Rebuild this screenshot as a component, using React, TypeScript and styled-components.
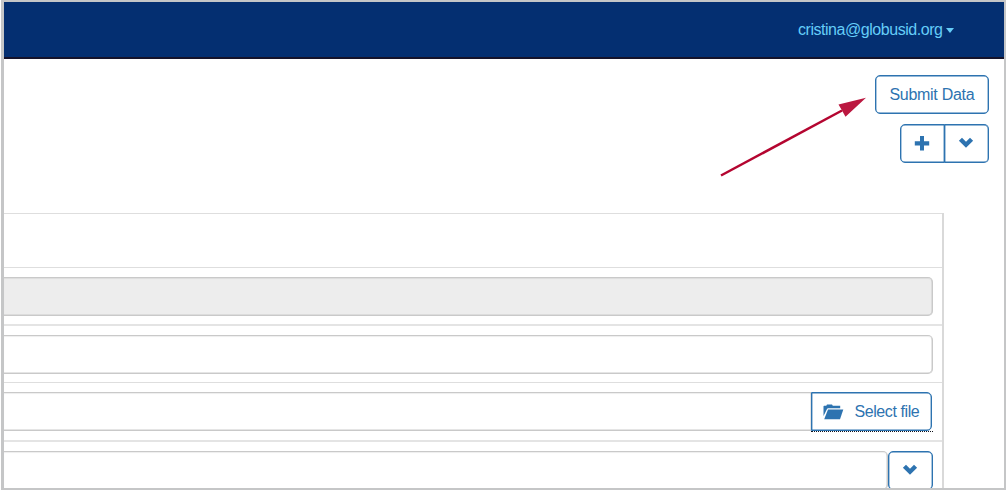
import React from 'react';
import styled, { createGlobalStyle, css } from 'styled-components';

const GlobalStyle = createGlobalStyle`
  * { box-sizing: border-box; }
  body { margin: 0; background: #fff; font-family: "Liberation Sans", Arial, sans-serif; }
`;

const blue = '#2d73b0';

const Frame = styled.div`
  position: relative;
  width: 1005px;
  height: 490px;
  margin-left: 1px;
  border: 2px solid #c5c6c7;
  border-left-width: 3px;
  overflow: hidden;
  display: flex;
  flex-direction: column;
  background: #fff;
`;

const Navbar = styled.header`
  flex: none;
  height: 57px;
  display: flex;
  justify-content: flex-end;
  align-items: center;
  padding-right: 50px;
  background: #042f71;
  border-bottom: 2px solid #15132b;
`;

const Account = styled.a`
  display: flex;
  align-items: center;
  gap: 2px;
  color: #65cdf8;
  font-size: 16px;
  line-height: 20px;
`;

const Label = styled.span<{ $width: number; $spacing: number }>`
  width: ${(p) => p.$width}px;
  letter-spacing: ${(p) => p.$spacing}px;
  text-align: left;
  white-space: nowrap;
`;

const Caret = styled.span`
  margin-top: 1px;
  border: 4px solid transparent;
  border-top: 5px solid #65cdf8;
  border-bottom: 0;
`;

const Actions = styled.div`
  flex: none;
  height: 154px;
  display: flex;
  flex-direction: column;
  align-items: flex-end;
  gap: 10px;
  padding: 16px 15px 0 0;
`;

const Button = styled.button<{ $width: number; $height?: number; $radius?: string }>`
  flex: none;
  width: ${(p) => p.$width}px;
  height: ${(p) => p.$height ?? 39}px;
  display: flex;
  align-items: center;
  justify-content: center;
  padding: 0 1px 0 0;
  color: ${blue};
  background: #fff;
  border: 1px solid ${blue};
  border-radius: ${(p) => p.$radius ?? '5px'};
  font: 16px "Liberation Sans", Arial, sans-serif;
  box-shadow: inset 0 0 0 0.4px ${blue};
`;

const ButtonGroup = styled.div`
  display: flex;
  button + button { margin-left: -1px; border-left-color: transparent; background-clip: padding-box; }
`;

const Table = styled.div`
  flex: none;
  width: 940px;
  height: 300px;
  border-right: 2px solid #d9d9d9;
`;

const Row = styled.div<{ $height: number; $line?: string }>`
  height: ${(p) => p.$height}px;
  display: flex;
  align-items: flex-start;
  padding: 9px 9px 0 0;
  border-top: ${(p) => p.$line ?? '1px solid #dedede'};
`;

const Input = styled.div<{ $disabled?: boolean; $joined?: boolean }>`
  flex: 1;
  height: 39px;
  border: 1px solid #c9c9c9;
  border-left: 0;
  border-radius: ${(p) => (p.$joined ? '0' : '0 5px 5px 0')};
  background: ${(p) => (p.$disabled ? '#ededed' : '#fff')};
  box-shadow: inset 0 1px 1px rgba(0, 0, 0, 0.07), inset -0.5px -0.5px 0 #ccc;
  ${(p) => p.$joined && css`border-right: 0;`}
`;

const FileAction = styled.div`
  height: 40px;
  padding-right: 1px;
  border-bottom: 1px dotted #10141e;
  button { gap: 11px; }
`;

const Arrow = styled.svg`
  position: absolute;
  left: 706px;
  top: 88px;
`;

const Plus = () => (
  <svg width="16" height="16" viewBox="0 0 16 16" fill={blue}>
    <path d="M6 0h4v5.2h5.2v4.2H10v5.2H6V9.4H.8V5.2H6z" />
  </svg>
);

const Chevron = () => (
  <svg width="16" height="16" viewBox="0 0 16 16" fill={blue}>
    <path d="M.9 4.7 4 1.7l4 4 4-4 3.1 3L8 11.8z" />
  </svg>
);

const Folder = () => (
  <svg width="21" height="16" viewBox="0 0 21 16" fill={blue}>
    <path d="M.5 12V2.3L1 1.8h2.3L4 .6h5l.8 1.2h7.4v2.5H4.8L4 5.1z" />
    <path d="M5 5.4h15.3L17 15.2H1.2z" />
  </svg>
);

export default function App() {
  return (
    <>
      <GlobalStyle />
      <Frame>
        <Navbar>
          <Account>
            <Label $width={146} $spacing={-0.46}>cristina@globusid.org</Label>
            <Caret />
          </Account>
        </Navbar>
        <Actions>
          <Button $width={114}>
            <Label $width={84} $spacing={-0.3}>Submit Data</Label>
          </Button>
          <ButtonGroup>
            <Button $width={45} $radius="5px 0 0 5px" aria-label="Add"><Plus /></Button>
            <Button $width={45} $radius="0 5px 5px 0" aria-label="More"><Chevron /></Button>
          </ButtonGroup>
        </Actions>
        <Table>
          <Row $height={54} />
          <Row $height={57}><Input $disabled /></Row>
          <Row $height={58} $line="2px solid #e4e4e4"><Input /></Row>
          <Row $height={58}>
            <Input $joined />
            <FileAction>
              <Button $width={121} $radius="0 5px 5px 0">
                <Folder />
                <Label $width={65} $spacing={-0.42}>Select file</Label>
              </Button>
            </FileAction>
          </Row>
          <Row $height={60} $line="2px solid #e4e4e4">
            <Input />
            <Button $width={45} aria-label="Open"><Chevron /></Button>
          </Row>
        </Table>
        <Arrow width="160" height="92" viewBox="710 90 160 92">
          <path d="M721 175.5 842 110.5" stroke="#b40530" strokeWidth="2.5" fill="none" />
          <path d="M866 97.8 838.5 104.6 842 110.5 845.5 116.8z" fill="#bb1840" />
        </Arrow>
      </Frame>
    </>
  );
}
